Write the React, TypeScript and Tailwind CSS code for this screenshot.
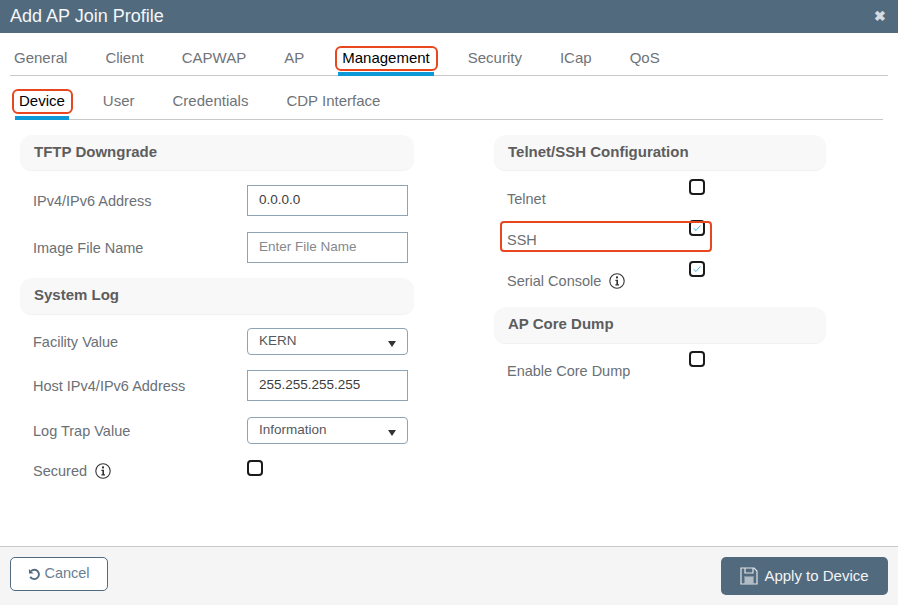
import React from "react";

const tabs = ["General", "Client", "CAPWAP", "AP", "Management", "Security", "ICap", "QoS"];
const subTabs = ["Device", "User", "Credentials", "CDP Interface"];

const Tab: React.FC<{ label: string; active: boolean }> = ({ label, active }) => (
    <div className={`relative h-full px-1 flex items-start ${active ? "text-black" : "text-[#6f7378]"}`}>
        <span className="leading-[18px]">{label}</span>
        {active && (
            <>
                <div className="absolute left-0 right-0 -bottom-px h-1 bg-[#0d98d8]" />
                <div className="absolute -left-[3px] -right-[4px] -top-[3px] h-[25px] border-2 border-[#e8461f] rounded-md" />
            </>
        )}
    </div>
);

const SectionHeader: React.FC<{ title: string; className?: string }> = ({ title, className }) => (
    <div className={`h-[35px] pl-[14px] pt-[8px] bg-[#f8f8f8] rounded-xl shadow-[0_1px_1px_#f0f0f0] text-[15px] leading-[18px] font-bold text-[#5d5d5d] ${className ?? ""}`}>
        {title}
    </div>
);

const InfoIcon: React.FC = () => (
    <svg viewBox="0 0 16 16" className="w-4 h-4 ml-2 inline-block shrink-0">
        <circle cx="8" cy="8" r="7.2" fill="none" stroke="#333" strokeWidth="1.1" />
        <rect x="7" y="3.4" width="2" height="2" fill="#333" />
        <path d="M6.4 6.8h2.6v4.4h1v1.2H6.4v-1.2h1V8H6.4z" fill="#333" />
    </svg>
);

const Checkbox: React.FC<{ checked?: boolean }> = ({ checked }) => (
    <div className="w-4 h-4 border-2 border-[#1a1a1a] rounded-[4px] flex items-center justify-center bg-white">
        {checked && (
            <svg viewBox="0 0 12 12" className="w-[10px] h-[10px]">
                <path d="M2 6.4 4.8 9 10 3" fill="none" stroke="#38a7de" strokeWidth="1.1" />
            </svg>
        )}
    </div>
);

const Label: React.FC<{ children: React.ReactNode }> = ({ children }) => (
    <span className="text-[14.5px] leading-[18px] text-[#6b7075] flex items-center">{children}</span>
);

const FieldRow: React.FC<{ label: React.ReactNode; className: string; children: React.ReactNode }> = ({ label, className, children }) => (
    <div className={`flex items-center pl-[13px] ${className}`}>
        <div className="w-[214px]"><Label>{label}</Label></div>
        {children}
    </div>
);

const TextBox: React.FC<{ value?: string; placeholder?: string }> = ({ value, placeholder }) => (
    <div className={`w-[161px] h-[31px] border border-[#8ea3b3] px-[11px] flex items-center text-[13.5px] ${placeholder ? "text-[#85898d]" : "text-[#3c3c3c] font-medium"}`}>
        {value ?? placeholder}
    </div>
);

const SelectBox: React.FC<{ value: string }> = ({ value }) => (
    <div className="w-[161px] h-[27px] border border-[#8ea3b3] rounded-[4px] pl-[11px] pr-[11px] flex justify-between text-[13.5px] text-[#55595d]">
        <span className="leading-[24px]">{value}</span>
        <svg viewBox="0 0 8 6" className="w-2 h-[6px] mt-[12px]"><path d="M0 0h8L4 6z" fill="#333" /></svg>
    </div>
);

const CheckRow: React.FC<{ label: React.ReactNode; checked?: boolean; className: string; highlighted?: boolean }> = ({ label, checked, className, highlighted }) => (
    <div className={`relative h-[18px] pl-[13px] flex ${className}`}>
        <div className="w-[182px] mt-[1px]"><Label>{label}</Label></div>
        <div className="-mt-[10px]"><Checkbox checked={checked} /></div>
        {highlighted && <div className="absolute left-[6px] -top-[9px] w-[212px] h-[31px] border-2 border-[#e8461f] rounded-[4px]" />}
    </div>
);

export default function App() {
    return (
        <div className="w-[898px] h-[605px] flex flex-col bg-white overflow-hidden font-['Liberation_Sans',Arial,sans-serif]">
            <div className="h-[33px] shrink-0 bg-[#526a7e] pl-[10px] pr-[12px] flex items-center justify-between text-white">
                <span className="text-[18px] text-[#f4f6f7]">Add AP Join Profile</span>
                <span className="text-[#d5dbe0] text-[14px] font-bold">✖</span>
            </div>

            <div className="flex-1">
                <div className="mt-[16px] ml-[10px] mr-[10px] h-[27px] border-b border-[#c8c8c8] flex gap-[30px] text-[15px]">
                    {tabs.map(tab => <Tab key={tab} label={tab} active={tab === "Management"} />)}
                </div>
                <div className="mt-[16px] ml-[15px] mr-[15px] h-[28px] border-b border-[#c8c8c8] flex gap-[30px] text-[15px]">
                    {subTabs.map(tab => <Tab key={tab} label={tab} active={tab === "Device"} />)}
                </div>

                <div className="mt-[15px] ml-[20px] flex">
                    <div className="w-[394px] shrink-0">
                        <SectionHeader title="TFTP Downgrade" />
                        <FieldRow label="IPv4/IPv6 Address" className="mt-[15px]"><TextBox value="0.0.0.0" /></FieldRow>
                        <FieldRow label="Image File Name" className="mt-[16px]"><TextBox placeholder="Enter File Name" /></FieldRow>
                        <SectionHeader title="System Log" className="mt-[15px] h-[36px]" />
                        <FieldRow label="Facility Value" className="mt-[14px]"><SelectBox value="KERN" /></FieldRow>
                        <FieldRow label="Host IPv4/IPv6 Address" className="mt-[15px]"><TextBox value="255.255.255.255" /></FieldRow>
                        <FieldRow label="Log Trap Value" className="mt-[16px]"><SelectBox value="Information" /></FieldRow>
                        <FieldRow label={<>Secured<InfoIcon /></>} className="mt-[18px] items-start">
                            <div className="-mt-[2px]"><Checkbox /></div>
                        </FieldRow>
                    </div>

                    <div className="w-[332px] ml-[80px] shrink-0">
                        <SectionHeader title="Telnet/SSH Configuration" />
                        <CheckRow label="Telnet" className="mt-[19px]" />
                        <CheckRow label="SSH" checked highlighted className="mt-[23px]" />
                        <CheckRow label={<>Serial Console<InfoIcon /></>} checked className="mt-[23px]" />
                        <SectionHeader title="AP Core Dump" className="mt-[18px] h-[36px]" />
                        <CheckRow label="Enable Core Dump" className="mt-[18px]" />
                    </div>
                </div>
            </div>

            <div className="h-[59px] shrink-0 border-t border-[#c8c8c8] bg-[#f5f5f5] pl-[10px] pr-[10px] pt-[10px] flex justify-between items-start">
                <div className="w-[98px] h-[34px] border border-[#526a7e] rounded-[5px] bg-white flex items-center justify-center gap-[3px] text-[14.5px] text-[#6a7f90]">
                    <svg viewBox="0 0 14 14" className="w-[13px] h-[13px]">
                        <path d="M3.2 3.4A5 5 0 1 1 2.4 9.4" fill="none" stroke="#526a7e" strokeWidth="2" />
                        <path d="M1 1v5h5z" fill="#526a7e" />
                    </svg>
                    Cancel
                </div>
                <div className="w-[167px] h-[38px] rounded-[5px] bg-[#526a7e] flex items-center justify-center gap-[6px] text-[15px] text-[#f2f4f6]">
                    <svg viewBox="0 0 18 18" className="w-[18px] h-[18px]">
                        <path d="M1 1h13l3 3v13H1z" fill="none" stroke="#dfe4e8" strokeWidth="1.2" />
                        <path d="M5 1v5h8V1" fill="none" stroke="#dfe4e8" strokeWidth="1.2" />
                        <path d="M4 9h10v8H4z" fill="#dfe4e8" opacity="0.35" />
                        <path d="M5 11h8M5 13h8M5 15h8" stroke="#dfe4e8" strokeWidth="1" />
                    </svg>
                    Apply to Device
                </div>
            </div>
        </div>
    );
}
